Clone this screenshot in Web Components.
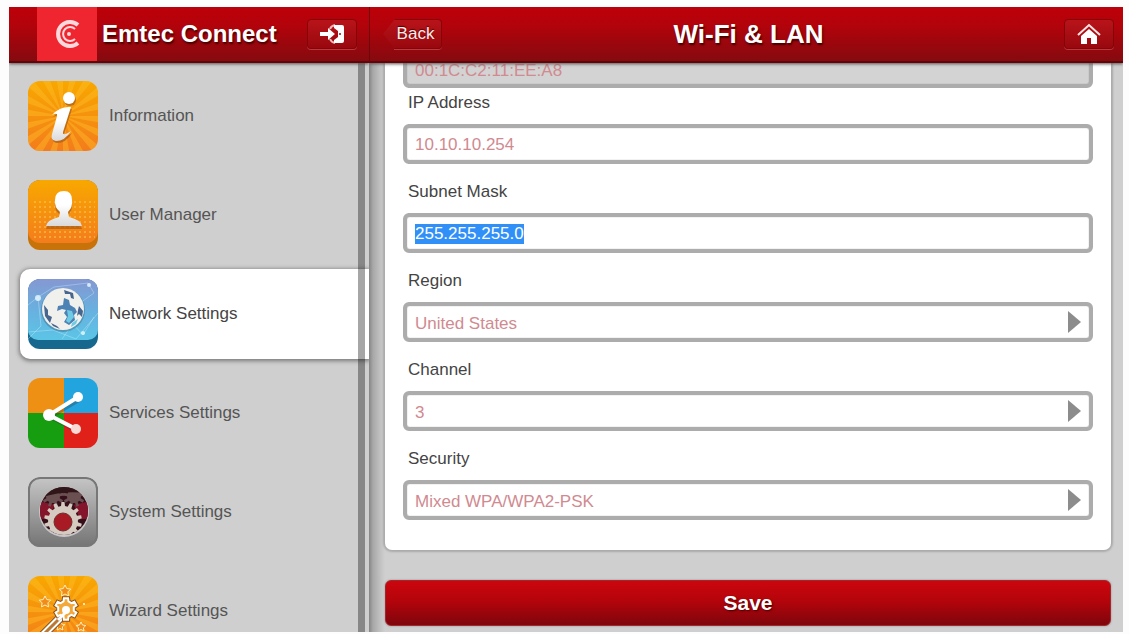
<!DOCTYPE html>
<html lang="en">
<head>
<meta charset="utf-8">
<title>Emtec Connect</title>
<style>
  html, body { height: 100%; }
  body {
    margin: 0; box-sizing: border-box; padding: 7px 6px 2px 9px; background: #fdfdfd;
    font-family: "Liberation Sans", Arial, sans-serif; font-size: 17px; color: #4a4a4a;
  }
</style>
</head>
<body>
<emtec-app></emtec-app>
<script>
const define = (name, html, setup) => {
  const template = document.createElement('template');
  template.innerHTML = html;
  customElements.define(name, class extends HTMLElement {
    connectedCallback() {
      if (this.shadowRoot) return;
      this.attachShadow({ mode: 'open' }).append(template.content.cloneNode(true));
      if (setup) setup(this, this.shadowRoot);
    }
  });
};

const rays = (cx, cy, n, color) => {
  let d = '';
  for (let i = 0; i < n; i++) {
    const a = i * 2 * Math.PI / n, b = a + Math.PI / n;
    const p = t => `${(cx + 80 * Math.cos(t)).toFixed(1)} ${(cy + 80 * Math.sin(t)).toFixed(1)}`;
    d += `M${cx} ${cy}L${p(a)}L${p(b)}Z`;
  }
  return `<path d="${d}" fill="${color}"/>`;
};
const gear = (cx, cy, n, r, R) => {
  const pts = [];
  for (let i = 0; i < n; i++) {
    const s = 2 * Math.PI / n, a = i * s - Math.PI / 2;
    [[-.3, r], [-.18, R], [.18, R], [.3, r]].forEach(([o, q]) =>
      pts.push(`${(cx + q * Math.cos(a + o * s)).toFixed(1)},${(cy + q * Math.sin(a + o * s)).toFixed(1)}`));
  }
  return pts.join(' ');
};
const star = (cx, cy, r) => {
  const pts = [];
  for (let i = 0; i < 10; i++) {
    const a = i * Math.PI / 5 - Math.PI / 2, q = i % 2 ? r / 2 : r;
    pts.push(`${(cx + q * Math.cos(a)).toFixed(1)},${(cy + q * Math.sin(a)).toFixed(1)}`);
  }
  return pts.join(' ');
};
const orange = `<linearGradient id="o" x2="0" y2="1"><stop stop-color="#f8a800"/><stop offset="1" stop-color="#f37c1c"/></linearGradient>`;
const white = `<linearGradient id="w" x2="0" y2="1"><stop stop-color="#fff"/><stop offset=".4" stop-color="#fff"/><stop offset="1" stop-color="#d9d9d9"/></linearGradient>`;

const tiles = {
  info: `<defs>${orange}${white}</defs><rect width="70" height="70" fill="url(#o)"/>${rays(35, 35, 18, '#ffc02a66')}
    <g fill="#a85a18" opacity=".7" transform="translate(1 2)"><circle cx="41" cy="17" r="6"/><path d="M24 34Q32 25 43 26L35 51Q34 56 43 50Q37 60 28 60Q22 59 24 53L29 35Q30 31 24 34Z"/></g>
    <circle cx="41" cy="17" r="6" fill="#fff"/><path fill="url(#w)" d="M24 34Q32 25 43 26L35 51Q34 56 43 50Q37 60 28 60Q22 59 24 53L29 35Q30 31 24 34Z"/>`,
  user: `<defs>${orange}${white}<pattern id="d" width="5" height="5" patternUnits="userSpaceOnUse"><circle cx="2" cy="2" r="1" fill="#ffc14c"/></pattern></defs>
    <rect width="70" height="70" fill="#c87309"/><rect width="70" height="63" rx="12" fill="url(#o)"/><rect x="3" y="20" width="64" height="40" fill="url(#d)" opacity=".8"/>
    <path transform="translate(0 3)" fill="#a85a10" opacity=".7" d="M27 20Q27 11 36 11Q44 11 44 20Q45 27 40 32L41 37Q53 40 54 46H18Q19 40 31 37L32 32Q26 27 27 20Z"/>
    <path fill="url(#w)" d="M27 20Q27 11 36 11Q44 11 44 20Q45 27 40 32L41 37Q53 40 54 46H18Q19 40 31 37L32 32Q26 27 27 20Z"/>`,
  network: `<defs><linearGradient id="b" x2="0" y2="1"><stop stop-color="#8698d2"/><stop offset=".5" stop-color="#69b0df"/><stop offset="1" stop-color="#5bc5e6"/></linearGradient></defs>
    <rect width="70" height="70" fill="#17688f"/><rect width="70" height="61" rx="10" fill="url(#b)"/>
    <path d="M0 26L10 18L26 8L60 4L66 14L52 24M66 38L55 56L45 45L34 60M0 53L25 51L48 60L70 34M10 18L13 47L0 60" fill="none" stroke="#d8f7ff" opacity=".35"/>
    <g fill="#e8fbff" opacity=".8"><circle cx="10" cy="19" r="3"/><circle cx="61" cy="6" r="2"/><circle cx="55" cy="54" r="2"/></g>
    <circle cx="35" cy="31" r="22" fill="#457f9f" opacity=".6"/><circle cx="35" cy="30" r="21" fill="#f0f0ec"/>
    <path fill="#47668f" d="M36 11L45 14L46 20L43 19L42 15L37 15ZM16 26L20 31L20 36L24 38L22 44L17 37ZM23 44L29 47L32 50L25 47ZM51 27L55 32L54 38L51 35L49 37L50 31Z"/>
    <path fill="#4d82b4" d="M36 19L41 21L42 26L47 29L49 33L46 36L47 41L41 46L36 43L39 38L36 34L38 31L34 30L29 32L30 27L35 26Z"/>
    <path fill="#6ecbe6" d="M39 31L44 32L46 38L41 44L38 42L40 37ZM44 44L50 40L48 45L43 48Z"/>`,
  services: `<path fill="#ee9013" d="M0 0H36V35H0Z"/><path fill="#22a5df" d="M36 0H70V35H36Z"/><path fill="#169d10" d="M0 35H36V70H0Z"/><path fill="#df2119" d="M36 35H70V70H36Z"/>
    <g transform="translate(1 2)" opacity=".3"><path d="M50 20L21 37L48 51" stroke="#333" stroke-width="4" fill="none"/></g>
    <path d="M50 19L21 37L48 51" stroke="#fff" stroke-width="4" fill="none"/><g fill="#fff"><circle cx="50" cy="19" r="5"/><circle cx="21" cy="37" r="6"/><circle cx="48" cy="51" r="5" fill="#f8d9d6"/></g>`,
  system: `<defs><linearGradient id="g" x2="0" y2="1"><stop stop-color="#c6c6c6"/><stop offset="1" stop-color="#747474"/></linearGradient><clipPath id="c"><circle cx="36" cy="34" r="24"/></clipPath></defs>
    <rect width="70" height="70" fill="url(#g)"/><rect x="1" y="1" width="68" height="68" rx="11" fill="none" stroke="#777" stroke-width="2"/>
    <circle cx="36" cy="35" r="25" fill="#c8c8c8"/>
    <g clip-path="url(#c)"><rect width="70" height="70" fill="#35101a"/>
      <path d="M10 24L27 28L20 42H10ZM62 24L46 28L52 42H62Z" fill="#85152a"/>
      <g fill="#6b5052"><polygon points="${gear(25, 19, 9, 7, 11)}"/><polygon points="${gear(46, 19, 9, 7, 11)}"/></g>
      <path d="M10 8H62V17Q36 12 10 22Z" fill="#301519"/>
      <polygon points="${gear(35, 44, 14, 15, 19)}" fill="#d6cbc0"/></g>
    <circle cx="35" cy="45" r="9" fill="#a81a24" stroke="#6d3030"/>`,
  wizard: `<defs>${orange}</defs><rect width="70" height="70" fill="url(#o)"/>${rays(36, 36, 18, '#ffc02a66')}
    <g fill="#f08c17" stroke="#fff0c0" stroke-width="1"><polygon points="${star(37, 15, 6)}"/><polygon points="${star(17, 26, 6)}"/><polygon points="${star(32, 50, 5)}"/><polygon points="${star(53, 51, 5)}"/></g>
    <path d="M38 36L10 64" stroke="#8b531d" stroke-width="9"/><path d="M38 36L10 64" stroke="#fff" stroke-width="7"/><path d="M34 40L10 64" stroke="#b97833" stroke-width="3"/>
    <polygon points="${gear(38, 33, 6, 8, 11)}" fill="#f09a2c" stroke="#8b531d" stroke-width="4"/><polygon points="${gear(38, 33, 6, 8, 11)}" fill="#f3a83c" stroke="#fff" stroke-width="2"/><circle cx="38" cy="34" r="4" fill="#fff"/><path d="M38 36L30 44" stroke="#fff" stroke-width="3"/><circle cx="56" cy="28" r="1" fill="#fff"/>`
};

define('tile-icon', `<style>
  :host { display: block; width: 70px; height: 70px; border-radius: 12px; overflow: hidden; flex: none; }
  svg { display: block; width: 100%; height: 100%; }
</style><div></div>`, (el, root) => {
  root.querySelector('div').innerHTML = `<svg viewBox="0 0 70 70" aria-hidden="true">${tiles[el.getAttribute('name')]}</svg>`;
});

define('nav-item', `<style>
  :host { display: block; flex: none; height: 90px; border-radius: 10px 0 0 10px; }
  :host([active]) { background: #fff; box-shadow: 0 1px 4px 1px #777; }
  a { display: flex; align-items: center; gap: 11px; height: 100%; padding-left: 8px; color: #555; text-decoration: none; }
  :host([active]) a { color: #444; }
</style><a href="#"><tile-icon></tile-icon><slot></slot></a>`, (el, root) => {
  const icon = document.createElement('tile-icon');
  icon.setAttribute('name', el.getAttribute('icon'));
  root.querySelector('tile-icon').replaceWith(icon);
});

define('bar-button', `<style>
  :host { display: block; }
  button {
    display: flex; align-items: center; justify-content: center; box-sizing: border-box;
    width: 50px; height: 30px; padding: 0; font: inherit; color: #ffecec; text-shadow: 0 -1px 1px #500;
    background: linear-gradient(#b8141a, #98080e); border: 1px solid #860409; border-radius: 4px;
    box-shadow: 0 1px 0 #b93a3c;
  }
  svg { display: block; }
  .back { position: relative; width: 48px; border-left: 0; border-radius: 0 4px 4px 0; margin-left: 11px; padding-right: 4px; }
  .back::before {
    content: ""; position: absolute; left: -11px; top: -1px; width: 12px; height: 30px;
    background: linear-gradient(#b8141a, #98080e); clip-path: polygon(0 50%, 100% 0, 100% 100%);
  }
</style><button type="button"><slot></slot></button>`, (el, root) => {
  const b = root.querySelector('button');
  if (el.hasAttribute('back')) b.className = 'back';
  if (el.hasAttribute('label')) b.setAttribute('aria-label', el.getAttribute('label'));
});

define('app-bar', `<style>
  :host {
    display: flex; align-items: center; height: 56px; flex: none; box-sizing: border-box; position: relative; z-index: 2;
    background: linear-gradient(#bd0009, #b2030b 35%, #850a0f); border-bottom: 2px solid #630508;
    box-shadow: 0 1px 3px #555; color: #fff; text-shadow: 1px 2px 2px #400;
  }
</style><slot></slot>`);

define('form-field', `<style>
  :host { display: block; padding-bottom: 15px; }
  :host([readonly]) { padding-bottom: 2px; }
  label { display: block; line-height: 26px; margin: 0 0 8px 5px; color: #444; }
  .box { display: grid; align-items: center; height: 40px; box-sizing: border-box; border: 4px solid #acacac; border-radius: 6px; background: #fff; box-shadow: inset 0 0 1px #777; overflow: hidden; }
  :host([readonly]) .box { background: #d3d3d3; }
  input, select {
    grid-area: 1 / 1; appearance: none; width: 100%; height: 32px; box-sizing: border-box; margin: 0; padding: 2px 8px 0;
    border: 0; outline: 0; background: none; font: inherit; color: #d08a90;
  }
  :host([readonly]) input { padding-top: 6px; }
  ::selection { background: #3190f8; color: #fff; }
  svg { grid-area: 1 / 1; justify-self: end; margin-right: 8px; pointer-events: none; }
</style><div class="box"></div>`, (el, root) => {
  const box = root.querySelector('.box'), value = el.getAttribute('value'), name = el.getAttribute('label');
  const control = document.createElement(el.hasAttribute('choice') ? 'select' : 'input');
  control.id = 'control';
  if (el.hasAttribute('choice')) {
    control.append(new Option(value));
    box.append(control);
    box.insertAdjacentHTML('beforeend', '<svg width="14" height="22" aria-hidden="true"><path d="M1 0L14 11L1 22Z" fill="#8c8c8c"/></svg>');
  } else {
    control.type = 'text';
    control.value = value;
    box.append(control);
  }
  if (el.hasAttribute('readonly')) {
    control.readOnly = true;
    control.setAttribute('aria-label', name);
  } else {
    const label = document.createElement('label');
    label.htmlFor = 'control';
    label.textContent = name;
    box.before(label);
  }
  if (el.hasAttribute('selected')) {
    control.focus({ preventScroll: true });
    control.select();
  }
});

define('side-panel', `<style>
  :host { display: flex; flex-direction: column; position: relative; min-height: 0; background: #cfcfcf; overflow: clip; }
  .brand { flex: none; align-self: stretch; width: 60px; display: flex; align-items: center; justify-content: center; margin-left: 28px; background: #ef2530; }
  h1 { flex: 1; margin: 0 0 0 5px; font-size: 24px; line-height: 28px; }
  bar-button { margin-right: 12px; }
  nav { flex: 1; min-height: 0; display: flex; flex-direction: column; gap: 9px; padding: 8px 0 0 11px; overflow: clip; }
  .thumb { position: absolute; right: 4px; top: 56px; bottom: 0; width: 7px; background: #000; opacity: .35; }
</style>
<app-bar>
  <div class="brand"><svg width="26" height="28" viewBox="0 0 26 28" fill="none" stroke="#ffd9dc" aria-hidden="true"><path d="M24 5A12 12 0 1 0 24 23" stroke-width="4"/><path d="M21 9A7 7 0 1 0 21 19" stroke-width="2"/><circle cx="15" cy="14" r="2" fill="#ffd9dc" stroke="none"/></svg></div>
  <h1>Emtec Connect</h1>
  <bar-button label="Log out"><svg width="26" height="20" viewBox="0 0 26 20" aria-hidden="true"><path d="M11 5Q12 2 16 1M11 15Q12 18 16 19" fill="none" stroke="#f4b8b8" stroke-width="2"/><path d="M15 1H23Q25 1 25 3V17Q25 19 23 19H15V16L19 13V7L15 4Z" fill="#fff"/><path d="M1 8H9V4L16 10L9 16V12H1Z" fill="#fff"/><circle cx="21" cy="10" r="1" fill="#a00"/></svg></bar-button>
</app-bar>
<nav>
  <nav-item icon="info">Information</nav-item>
  <nav-item icon="user">User Manager</nav-item>
  <nav-item icon="network" active>Network Settings</nav-item>
  <nav-item icon="services">Services Settings</nav-item>
  <nav-item icon="system">System Settings</nav-item>
  <nav-item icon="wizard">Wizard Settings</nav-item>
</nav>
<div class="thumb"></div>`);

define('settings-page', `<style>
  :host { display: flex; flex-direction: column; min-width: 0; min-height: 0; background: #cfcfcf; overflow: clip; }
  app-bar { border-left: 1px solid #6e060a; padding: 0 9px 0 13px; }
  .side { flex: 1; display: flex; }
  .end { justify-content: flex-end; }
  h2 { margin: 0; font-size: 26px; line-height: 30px; }
  /* Pane is scrolled to its end: the overflow runs up under the bar. */
  form {
    flex: 1; min-height: 0; display: flex; flex-direction: column; justify-content: flex-end; gap: 30px;
    padding: 0 12px 6px 16px; overflow: clip;
    background: linear-gradient(90deg, #858585, #a8a8a8 4px, #c4c4c4 12px, #cfcfcf 16px);
  }
  .card { flex: none; padding: 15px 18px; border-radius: 7px; background: #fff; box-shadow: 0 0 2px 2px #aaa; }
  .save {
    flex: none; height: 46px; padding: 0; border: 1px solid #a3262a; border-radius: 6px; color: #fff; font: bold 21px "Liberation Sans", Arial, sans-serif;
    text-shadow: 1px 1px 2px #400; background: linear-gradient(#cc060e, #b4040b 45%, #7e060c); box-shadow: 0 0 2px #888;
  }
</style>
<app-bar>
  <div class="side"><bar-button back>Back</bar-button></div>
  <h2>Wi-Fi &amp; LAN</h2>
  <div class="side end"><bar-button label="Home"><svg width="24" height="22" viewBox="0 0 24 22" aria-hidden="true"><path d="M1 12L12 2L23 12" fill="none" stroke="#ffe3e3" stroke-width="2"/><path d="M4 13L12 6L20 13V21H14V15H10V21H4Z" fill="#fff"/></svg></bar-button></div>
</app-bar>
<form>
  <div class="card">
    <form-field readonly label="MAC Address" value="00:1C:C2:11:EE:A8"></form-field>
    <form-field label="IP Address" value="10.10.10.254"></form-field>
    <form-field selected label="Subnet Mask" value="255.255.255.0"></form-field>
    <form-field choice label="Region" value="United States"></form-field>
    <form-field choice label="Channel" value="3"></form-field>
    <form-field choice label="Security" value="Mixed WPA/WPA2-PSK"></form-field>
  </div>
  <button class="save" type="button">Save</button>
</form>`);

define('emtec-app', `<style>
  :host { display: grid; grid-template-columns: 360px minmax(0, 1fr); grid-template-rows: minmax(0, 1fr); height: 100%; }
</style><side-panel></side-panel><settings-page></settings-page>`);
</script>
</body>
</html>
